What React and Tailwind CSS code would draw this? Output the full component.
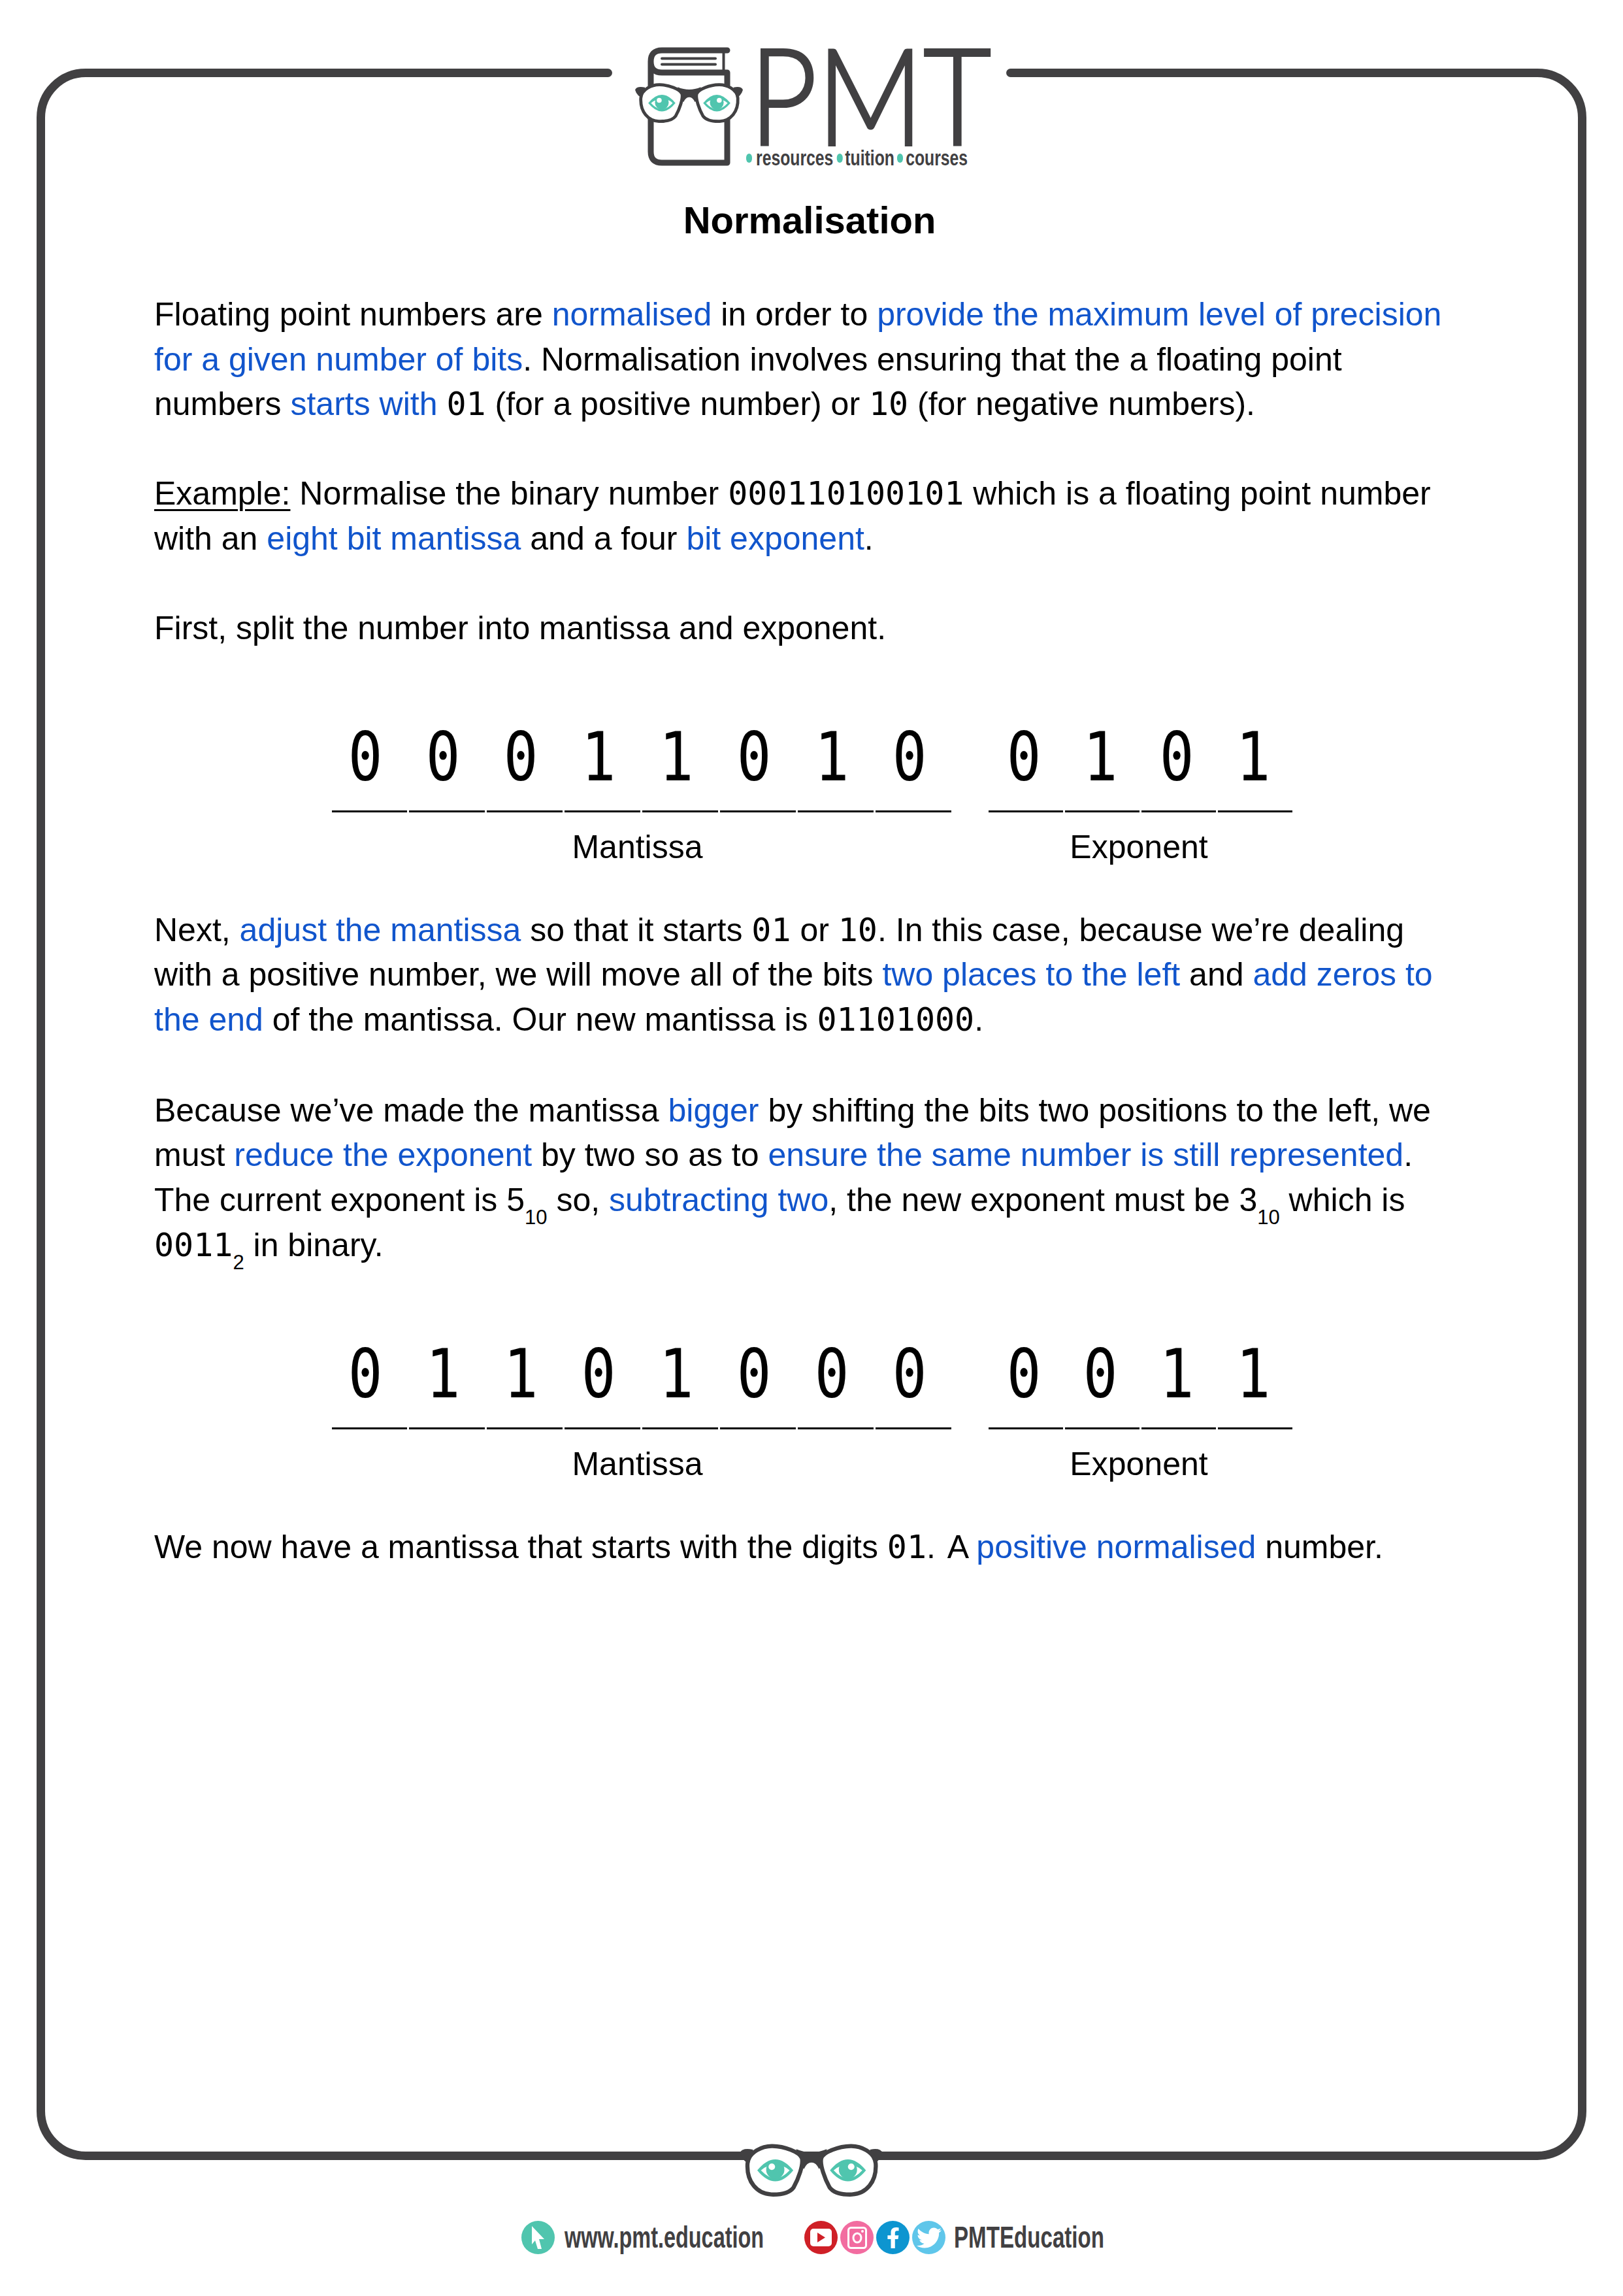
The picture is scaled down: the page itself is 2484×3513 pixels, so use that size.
import React from 'react';
import { FaTwitter, FaFacebookF } from 'react-icons/fa';

const B = ({ children }) => <span className="text-[#1155cc]">{children}</span>;
const M = ({ children }) => <span className="font-['DejaVu_Sans_Mono',monospace] text-[50px]">{children}</span>;
const Sub = ({ children }) => <sub className="text-[31px] leading-none align-[-13px]">{children}</sub>;

// glasses, drawn in the coordinates of the footer crop
const Glasses = ({ className }) => (
  <svg className={className} viewBox="155 120 657 250">
    <path d="M155 165 Q165 140 215 150 L215 225 Q165 205 155 165Z" fill="#414042" />
    <path d="M812 165 Q802 140 755 150 L755 225 Q802 205 812 165Z" fill="#414042" />
    <path d="M415 148 Q485 178 555 148 V195 L520 240 Q505 208 485 210 Q465 208 450 240 L415 195Z" fill="#414042" />
    <path d="M190 215 C195 160 260 133 305 134 C360 135 430 160 441 190 C448 220 425 285 402 325 C382 352 335 358 300 357 C235 354 185 300 190 215Z" fill="#fff" stroke="#414042" strokeWidth="19" />
    <path d="M781 215 C776 160 711 133 666 134 C611 135 541 160 530 190 C523 220 546 285 569 325 C589 352 636 358 671 357 C736 354 786 300 781 215Z" fill="#fff" stroke="#414042" strokeWidth="19" />
    <path d="M235 246 Q318 145 401 246 Q318 347 235 246Z M252 246 Q318 318 384 246 Q360 222 318 222 Q276 222 252 246Z" fill="#50c5ae" fillRule="evenodd" />
    <circle cx="318" cy="243" r="42" fill="#50c5ae" />
    <circle cx="302" cy="229" r="15" fill="#fff" />
    <path d="M570 246 Q653 145 736 246 Q653 347 570 246Z M587 246 Q653 318 719 246 Q695 222 653 222 Q611 222 587 246Z" fill="#50c5ae" fillRule="evenodd" />
    <circle cx="653" cy="243" r="42" fill="#50c5ae" />
    <circle cx="668" cy="229" r="15" fill="#fff" />
  </svg>
);

const Book = () => (
  <svg className="w-[130px] h-[190px] shrink-0" viewBox="990 68 130 190" fill="none" stroke="#414042">
    <path d="M1113 77 H1013 Q996 77 996 94 V232 Q996 249 1013 249 H1113 V111 H1013 Q996 111 996 94" strokeWidth="9" strokeLinecap="round" strokeLinejoin="round" />
    <path d="M1107.5 80 V108" strokeWidth="4" />
    <path d="M1013 89.5 H1095 M1013 98.5 H1095" strokeWidth="4" strokeLinecap="round" />
  </svg>
);

const Dot = () => <span className="w-[12px] h-[14px] rounded-full bg-[#50c5ae] shrink-0" />;

const BitRow = ({ bits, pitch, shift }) => (
  <div className="flex">
    {bits.split('').map((b, i) => (
      <div key={i} className="flex flex-col items-center" style={{ width: pitch }}>
        <span className="font-['DejaVu_Sans_Mono',monospace] text-[103px] leading-[120px] scale-x-[0.85]" style={{ translate: shift }}>{b}</span>
        <span className="block h-[3px] w-[calc(100%-3px)] bg-black mt-[22px]" />
      </div>
    ))}
  </div>
);

const Binary = ({ mantissa, exponent }) => (
  <div className="flex ml-[270px] mt-[102px]">
    <div className="w-[951px] mr-[54px]">
      <BitRow bits={mantissa} pitch={118.9} shift="-6px" />
      <div className="text-center leading-[68px] mt-[19px] pr-[12px]">Mantissa</div>
    </div>
    <div className="w-[468px]">
      <BitRow bits={exponent} pitch={117} shift="-2px" />
      <div className="text-center leading-[68px] mt-[19px] pr-[4px]">Exponent</div>
    </div>
  </div>
);

export default function App() {
  return (
    <div className="relative w-[2484px] h-[3513px] bg-white text-black font-['Liberation_Sans',Arial,sans-serif] text-[50px] leading-[68.6px] pt-[105px] pl-[56px] overflow-hidden">
      {/* frame */}
      <div className="w-[2372px] h-[3200px] border-[13px] border-[#414042] rounded-[75px] pl-[167px] pt-[185px]">
        <h1 className="w-[2006px] text-center font-bold text-[58px] leading-[68px]">Normalisation</h1>

        <p className="mt-[76px]">
          Floating point numbers are <B>normalised</B> in order to <B>provide the maximum level of precision</B>
          <br />
          <B>for a given number of bits</B>. Normalisation involves ensuring that the a floating point
          <br />
          numbers <B>starts with</B> <M>01</M> (for a positive number) or <M>10</M> (for negative numbers).
        </p>
        <p className="mt-[68.6px]">
          <span className="underline underline-offset-[7px] decoration-[3px]">Example:</span> Normalise the binary number <M>000110100101</M> which is a floating point number
          <br />
          with an <B>eight bit mantissa</B> and a four <B>bit exponent</B>.
        </p>
        <p className="mt-[68.6px]">First, split the number into mantissa and exponent.</p>

        <Binary mantissa="00011010" exponent="0101" />

        <p className="mt-[59px]">
          Next, <B>adjust the mantissa</B> so that it starts <M>01</M> or <M>10</M>. In this case, because we’re dealing
          <br />
          with a positive number, we will move all of the bits <B>two places to the left</B> and <B>add zeros to</B>
          <br />
          <B>the end</B> of the mantissa. Our new mantissa is <M>01101000</M>.
        </p>
        <p className="mt-[70px]">
          Because we’ve made the mantissa <B>bigger</B> by shifting the bits two positions to the left, we
          <br />
          must <B>reduce the exponent</B> by two so as to <B>ensure the same number is still represented</B>.
          <br />
          The current exponent is 5<Sub>10</Sub> so, <B>subtracting two</B>, the new exponent must be 3<Sub>10</Sub> which is
          <br />
          <M>0011</M><Sub>2</Sub> in binary.
        </p>

        <Binary mantissa="01101000" exponent="0011" />

        <p className="mt-[59px]">
          We now have a mantissa that starts with the digits <M>01</M>. <span className="ml-[4px]">A</span> <B>positive normalised</B> number.
        </p>
      </div>

      {/* logo sits over the top edge of the frame */}
      <div className="absolute left-[930px] top-[60px] w-[617px] h-[200px] bg-white flex items-start">
        <span className="absolute left-0 top-[45px] w-[7px] h-[13px] bg-[#414042] rounded-r-full" />
        <span className="absolute right-0 top-[45px] w-[7px] h-[13px] bg-[#414042] rounded-l-full" />
        <div className="relative ml-[60px] mt-[8px] w-[130px] h-[190px]">
          <Book />
          <Glasses className="absolute -left-[18px] top-[58px] w-[165px] h-[63px]" />
        </div>
        <div className="ml-[27px] relative">
          <div className="font-['Lato',sans-serif] font-light [-webkit-text-stroke:4px_#414042] text-[#414042] text-[206px] leading-[150px] h-[159px] mt-[8px] whitespace-nowrap origin-left scale-x-[0.87]">PMT</div>
          <div className="flex items-center -ml-[5px] h-[30px] w-[447px] origin-left scale-x-[0.75] font-bold text-[33px] leading-[30px] text-[#414042] whitespace-nowrap">
            <Dot /><span className="ml-[8px]">resources</span>
            <span className="ml-[7px] flex"><Dot /></span><span className="ml-[5px]">tuition</span>
            <span className="ml-[5px] flex"><Dot /></span><span className="ml-[6px]">courses</span>
          </div>
        </div>
      </div>

      {/* glasses over the bottom edge */}
      <Glasses className="absolute left-[1132px] top-[3279px] w-[219px] h-[83px]" />

      {/* footer */}
      <div className="flex items-center ml-[742px] mt-[93px] h-[51px] text-[#414042] font-bold">
        <span className="w-[51px] h-[51px] rounded-full bg-[#50c5ae] flex items-center justify-center shrink-0">
          <svg className="w-[30px] h-[38px]" viewBox="0 0 30 38"><path d="M5 1 L24 21 L16 21 L20 36 L14 36 L10 23 L5 29Z" fill="#fff" /></svg>
        </span>
        <span className="ml-[15px] w-[300px] text-[46px] whitespace-nowrap origin-left scale-x-[0.705]">www.pmt.education</span>
        <div className="flex ml-[67px] gap-[4px]">
          <span className="w-[51px] h-[51px] rounded-full bg-[#cf2027] flex items-center justify-center">
            <span className="w-[33px] h-[27px] rounded-[5px] bg-white flex items-center justify-center">
              <svg className="w-[13px] h-[15px]" viewBox="0 0 13 15"><path d="M1 0 L13 7.5 L1 15Z" fill="#cf2027" /></svg>
            </span>
          </span>
          <span className="w-[51px] h-[51px] rounded-full bg-[#f26ca0] flex items-center justify-center">
            <svg className="w-[30px] h-[34px]" viewBox="0 0 30 34" fill="none" stroke="#fff">
              <rect x="1.5" y="1.5" width="27" height="31" rx="4" strokeWidth="3" />
              <ellipse cx="15" cy="17" rx="6" ry="7" strokeWidth="3" />
              <circle cx="23" cy="7" r="2" fill="#fff" stroke="none" />
            </svg>
          </span>
          <span className="w-[51px] h-[51px] rounded-full bg-[#0d95d0] flex items-center justify-center text-white">
            <FaFacebookF className="w-[22px] h-[32px]" />
          </span>
          <span className="w-[51px] h-[51px] rounded-full bg-[#5fc6ea] flex items-center justify-center text-white">
            <FaTwitter className="w-[38px] h-[38px]" />
          </span>
        </div>
        <span className="ml-[13px] text-[46px] whitespace-nowrap origin-left scale-x-[0.72]">PMTEducation</span>
      </div>
    </div>
  );
}
